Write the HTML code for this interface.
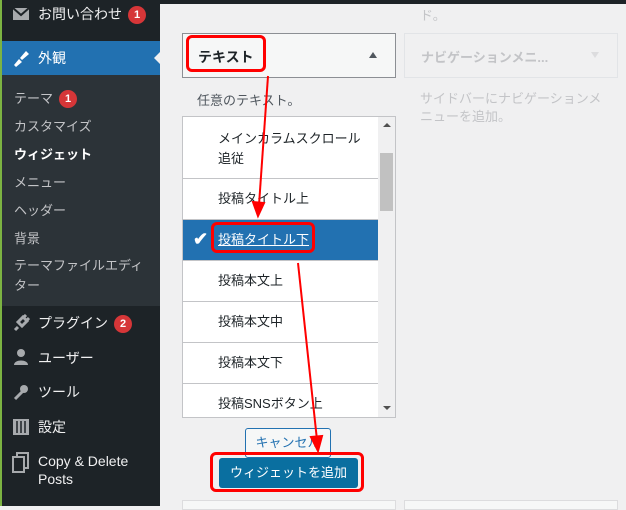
<!DOCTYPE html>
<html><head><meta charset="utf-8"><style>
*{margin:0;padding:0;box-sizing:border-box}
body{width:626px;height:506px;overflow:hidden;background:#f0f0f1;font-family:"Liberation Sans","Noto Sans CJK JP",sans-serif;position:relative;font-size:14px}
.abs{position:absolute}
#side{left:0;top:0;width:160px;height:506px;background:#1d2327;border-left:2px solid #7cb342}
.mi{position:absolute;left:36px;color:#f0f0f1;font-size:14px}
.ic{position:absolute;left:10px;width:18px;height:18px}
.badge{display:inline-block;background:#d63638;color:#fff;border-radius:9px;width:18px;height:18px;font-size:11px;line-height:18px;text-align:center;font-weight:bold;margin-left:6px;vertical-align:1px}
.sub{position:absolute;left:12px;color:#c3c4c7;font-size:13px}
.item{position:absolute;left:183px;width:195px;border-bottom:1px solid #c3c4c7;background:#fff;color:#1d2327;font-size:13px;padding-left:35px}
.red{position:absolute;border:3px solid #f00;border-radius:6px}
</style></head><body>
<div class="abs" style="left:160px;top:0;width:466px;height:4px;background:#1d2327"></div>
<div id="side" class="abs">
 <svg class="ic" style="top:5px" viewBox="0 0 18 18"><path d="M1 3h16v12H1z" fill="#a7aaad"/><path d="M1 3l8 7 8-7" stroke="#1d2327" stroke-width="2" fill="none"/></svg>
 <div class="mi" style="top:4px">お問い合わせ<span class="badge">1</span></div>
 <div class="abs" style="left:0;top:41px;width:158px;height:34px;background:#2271b1"></div>
 <div class="abs" style="left:152px;top:51px;width:0;height:0;border-top:7px solid transparent;border-bottom:7px solid transparent;border-right:7px solid #f0f0f1"></div>
 <svg class="ic" style="top:49px" viewBox="0 0 18 18"><path d="M2 16l5-6 3 3-6 5zM8 9l6-7 3 3-7 6z" fill="#fff"/></svg>
 <div class="mi" style="top:48px;color:#fff">外観</div>
 <div class="abs" style="left:0;top:75px;width:158px;height:231px;background:#2c3338"></div>
 <div class="sub" style="top:88px">テーマ<span class="badge">1</span></div>
 <div class="sub" style="top:116px">カスタマイズ</div>
 <div class="sub" style="top:144px;color:#fff;font-weight:bold">ウィジェット</div>
 <div class="sub" style="top:172px">メニュー</div>
 <div class="sub" style="top:200px">ヘッダー</div>
 <div class="sub" style="top:228px">背景</div>
 <div class="sub" style="top:256px;line-height:20px;width:140px">テーマファイルエディター</div>
 <svg class="ic" style="top:314px" viewBox="0 0 18 18"><path d="M3 16l3-3M6 8l5-5 4 4-5 5zM11 4l3-3M14 7l3-3" stroke="#a7aaad" stroke-width="3" fill="none"/></svg>
 <div class="mi" style="top:313px">プラグイン<span class="badge">2</span></div>
 <svg class="ic" style="top:348px" viewBox="0 0 18 18"><circle cx="9" cy="5" r="4" fill="#a7aaad"/><path d="M2 17c0-6 14-6 14 0z" fill="#a7aaad"/></svg>
 <div class="mi" style="top:348px">ユーザー</div>
 <svg class="ic" style="top:383px" viewBox="0 0 18 18"><path d="M3 16l8-8" stroke="#a7aaad" stroke-width="3"/><circle cx="12" cy="6" r="4" fill="#a7aaad"/></svg>
 <div class="mi" style="top:382px">ツール</div>
 <svg class="ic" style="top:418px" viewBox="0 0 18 18"><rect x="1" y="1" width="16" height="16" fill="#a7aaad"/><path d="M5 3v12M9 3v12M13 3v12" stroke="#1d2327" stroke-width="1.5"/></svg>
 <div class="mi" style="top:417px">設定</div>
 <svg class="ic" style="top:452px;height:22px" viewBox="0 0 18 22"><rect x="5" y="1" width="11" height="15" fill="none" stroke="#a7aaad" stroke-width="2"/><rect x="1" y="5" width="11" height="15" fill="#1d2327" stroke="#a7aaad" stroke-width="2"/></svg>
 <div class="mi" style="top:452px;line-height:18px">Copy &amp; Delete<br>Posts</div>
</div>

<div class="abs" style="left:420px;top:5px;color:#c3c4c7;font-size:13px">ド。</div>
<div class="abs" style="left:182px;top:33px;width:214px;height:45px;background:#f6f7f7;border:1px solid #8c8f94"></div>
<div class="abs" style="left:198px;top:47px;font-size:14px;color:#1d2327;font-weight:bold">テキスト</div>
<div class="abs" style="left:369px;top:52px;border-left:4px solid transparent;border-right:4px solid transparent;border-bottom:6px solid #50575e"></div>
<div class="red" style="left:186px;top:35px;width:80px;height:37px"></div>
<div class="abs" style="left:404px;top:33px;width:214px;height:45px;border:1px solid #e2e4e7"></div>
<div class="abs" style="left:421px;top:47px;color:#c3c4c7;font-weight:bold;font-size:13px">ナビゲーションメニ...</div>
<div class="abs" style="left:591px;top:52px;border-left:4px solid transparent;border-right:4px solid transparent;border-top:6px solid #dcdcde"></div>
<div class="abs" style="left:197px;top:90px;font-size:13px;color:#50575e">任意のテキスト。</div>
<div class="abs" style="left:420px;top:90px;font-size:13px;color:#c3c4c7;line-height:18px;width:190px">サイドバーにナビゲーションメニューを追加。</div>

<div class="abs" style="left:182px;top:116px;width:214px;height:302px;border:1px solid #c3c4c7;background:#fff;overflow:hidden">
</div>
<div class="item" style="top:117px;height:62px;padding-top:12px;line-height:20px">メインカラムスクロール<br>追従</div>
<div class="item" style="top:179px;height:41px;line-height:40px">投稿タイトル上</div>
<div class="item" style="top:220px;height:41px;line-height:40px;background:#2271b1;color:#fff;text-decoration:underline">投稿タイトル下</div>
<div class="abs" style="left:193px;top:229px;color:#fff;font-size:18px;font-weight:bold">✔</div>
<div class="red" style="left:211px;top:222px;width:104px;height:31px"></div>
<div class="item" style="top:261px;height:41px;line-height:40px">投稿本文上</div>
<div class="item" style="top:302px;height:41px;line-height:40px">投稿本文中</div>
<div class="item" style="top:343px;height:41px;line-height:40px">投稿本文下</div>
<div class="item" style="top:384px;height:33px;line-height:40px;border:none;overflow:hidden">投稿SNSボタン上</div>
<div class="abs" style="left:378px;top:117px;width:17px;height:300px;background:#f0f0f1"></div>
<div class="abs" style="left:380px;top:153px;width:13px;height:58px;background:#c1c1c1"></div>
<div class="abs" style="left:383px;top:123px;border-left:4px solid transparent;border-right:4px solid transparent;border-bottom:4px solid #505050"></div>
<div class="abs" style="left:383px;top:406px;border-left:4px solid transparent;border-right:4px solid transparent;border-top:4px solid #505050"></div>

<div class="abs" style="left:245px;top:428px;width:86px;height:30px;border:1px solid #2271b1;border-radius:3px;background:#f6f7f7;color:#2271b1;font-size:13px;text-align:center;line-height:28px">キャンセル</div>
<div class="abs" style="left:219px;top:458px;width:139px;height:30px;background:#0a6fa0;border-radius:3px;color:#fff;font-size:13px;text-align:center;line-height:29px">ウィジェットを追加</div>
<div class="red" style="left:210px;top:452px;width:154px;height:40px"></div>
<div class="abs" style="left:182px;top:500px;width:214px;height:10px;border:1px solid #dcdcde;background:#f6f7f7"></div>
<div class="abs" style="left:404px;top:500px;width:214px;height:10px;border:1px solid #dcdcde;background:#f6f7f7"></div>

<svg class="abs" style="left:0;top:0" width="626" height="506">
<g stroke="#f00" stroke-width="2" fill="#f00">
<line x1="268" y1="76" x2="259" y2="205"/><path d="M253 202l5 14 6-13z"/>
<line x1="298" y1="263" x2="317" y2="440"/><path d="M311 437l7 14 4-15z"/>
</g></svg>
</body></html>
